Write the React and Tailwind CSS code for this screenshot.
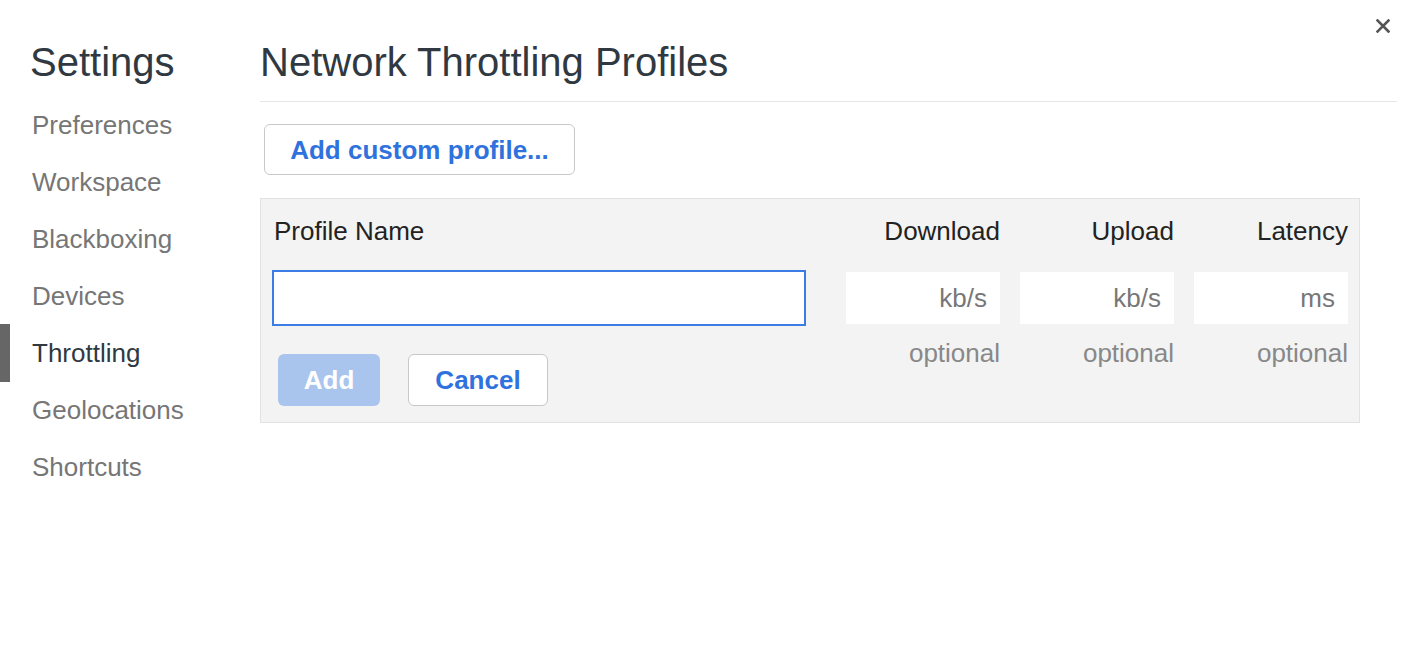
import { useState } from 'react'

const navItems = ['Preferences', 'Workspace', 'Blackboxing', 'Devices', 'Throttling', 'Geolocations', 'Shortcuts']

function Sidebar({ active }) {
  return (
    <aside className="w-[260px] shrink-0">
      <h1 className="mt-[38px] pl-[30px] text-[40px] leading-[48px] text-[#303942]">Settings</h1>
      <ul className="mt-[10px]">
        {navItems.map((item) => (
          <li
            key={item}
            className={`relative h-[57px] pl-[32px] pt-[1px] text-[26px] leading-[57px] ${
              item === active ? 'text-[#303942]' : 'text-[#767676]'
            }`}
          >
            {item === active && <span className="absolute left-0 top-0 h-[58px] w-[10px] bg-[#666666]" />}
            {item}
          </li>
        ))}
      </ul>
    </aside>
  )
}

function UnitInput({ unit }) {
  return (
    <input
      type="text"
      placeholder={unit}
      className="h-[52px] w-[154px] bg-white pr-[13px] text-right text-[26px] text-[#222] outline-none placeholder:text-[#777]"
    />
  )
}

export default function App() {
  const [name, setName] = useState('')

  return (
    <div className="relative flex h-[650px] bg-white font-['Liberation_Sans',Arial,sans-serif]">
      <Sidebar active="Throttling" />

      <main className="flex-1 pr-[19px]">
        <div className="border-b border-[#e6e6e6] pb-[15px] pt-[38px]">
          <h2 className="text-[40px] leading-[48px] text-[#303942]">Network Throttling Profiles</h2>
        </div>

        <button className="ml-[4px] mt-[22px] h-[51px] w-[311px] rounded-[6px] border border-[#c8c8c8] bg-white pt-[2px] text-[26px] font-bold text-[#2f72de]">
          Add custom profile...
        </button>

        <div className="mt-[23px] w-[1100px] border border-[#e2e2e2] bg-[#f3f3f3] pb-[16px] pl-[11px] pr-[11px] pt-[17px]">
          <div className="flex text-[26px] leading-[30px] text-[#222]">
            <div className="w-[574px] pl-[2px]">Profile Name</div>
            <div className="w-[154px] text-right">Download</div>
            <div className="ml-[20px] w-[154px] text-right">Upload</div>
            <div className="ml-[20px] w-[154px] text-right">Latency</div>
          </div>

          <div className="mt-[24px] flex h-[56px] items-center">
            <div className="w-[574px]">
              <input
                type="text"
                value={name}
                onChange={(e) => setName(e.target.value)}
                className="h-[56px] w-[534px] border-2 border-[#3b7de4] bg-white px-[8px] text-[26px] outline-none"
              />
            </div>
            <UnitInput unit="kb/s" />
            <div className="ml-[20px]">
              <UnitInput unit="kb/s" />
            </div>
            <div className="ml-[20px]">
              <UnitInput unit="ms" />
            </div>
          </div>

          <div className="flex">
            <div className="flex w-[574px] gap-[28px] pl-[6px] pt-[28px]">
              <button
                disabled
                className="h-[52px] w-[102px] rounded-[6px] bg-[#a9c5ee] text-[26px] font-bold text-white"
              >
                Add
              </button>
              <button className="h-[52px] w-[140px] rounded-[6px] border border-[#c8c8c8] bg-white text-[26px] font-bold text-[#2f72de]">
                Cancel
              </button>
            </div>
            {['d', 'u', 'l'].map((k, i) => (
              <div
                key={k}
                className={`w-[154px] pt-[12px] text-right text-[26px] leading-[30px] text-[#888] ${i > 0 ? 'ml-[20px]' : ''}`}
              >
                optional
              </div>
            ))}
          </div>
        </div>
      </main>

      <button className="absolute right-[26px] top-[19px] h-[14px] w-[14px] text-[#555]" aria-label="Close">
        <svg viewBox="0 0 14 14" width="14" height="14">
          <path d="M1.5 1.5 L12.5 12.5 M12.5 1.5 L1.5 12.5" stroke="currentColor" strokeWidth="2.6" strokeLinecap="square" />
        </svg>
      </button>
    </div>
  )
}
